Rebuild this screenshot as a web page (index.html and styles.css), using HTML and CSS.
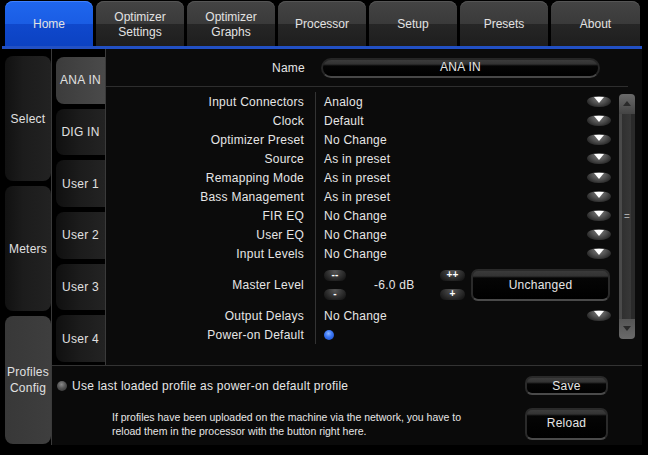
FILE: index.html
```html
<!DOCTYPE html>
<html>
<head>
<meta charset="utf-8">
<link rel="stylesheet" href="styles.css">
</head>
<body>
<div class="app">
  <nav class="tabs">
    <div class="tab active">Home</div>
    <div class="tab">Optimizer<br>Settings</div>
    <div class="tab">Optimizer<br>Graphs</div>
    <div class="tab">Processor</div>
    <div class="tab">Setup</div>
    <div class="tab">Presets</div>
    <div class="tab">About</div>
  </nav>
  <div class="blue-bar"></div>
  <div class="main">
    <div class="side">
      <div class="side-btn">Select</div>
      <div class="side-btn">Meters</div>
      <div class="side-btn tall active">Profiles<br>Config</div>
    </div>
    <div class="right">
      <div class="upper">
        <div class="ptabs">
          <div class="ptab active">ANA IN</div>
          <div class="ptab">DIG IN</div>
          <div class="ptab">User 1</div>
          <div class="ptab">User 2</div>
          <div class="ptab">User 3</div>
          <div class="ptab">User 4</div>
        </div>
        <div class="panel">
          <div class="name-row">
            <span class="name-label">Name</span>
            <div class="name-field">ANA IN</div>
          </div>
          <div class="list-wrap">
            <div class="list">
              <div class="row"><div class="lbl">Input Connectors</div><div class="val"><span>Analog</span><i class="dd"></i></div></div>
              <div class="row"><div class="lbl">Clock</div><div class="val"><span>Default</span><i class="dd"></i></div></div>
              <div class="row"><div class="lbl">Optimizer Preset</div><div class="val"><span>No Change</span><i class="dd"></i></div></div>
              <div class="row"><div class="lbl">Source</div><div class="val"><span>As in preset</span><i class="dd"></i></div></div>
              <div class="row"><div class="lbl">Remapping Mode</div><div class="val"><span>As in preset</span><i class="dd"></i></div></div>
              <div class="row"><div class="lbl">Bass Management</div><div class="val"><span>As in preset</span><i class="dd"></i></div></div>
              <div class="row"><div class="lbl">FIR EQ</div><div class="val"><span>No Change</span><i class="dd"></i></div></div>
              <div class="row"><div class="lbl">User EQ</div><div class="val"><span>No Change</span><i class="dd"></i></div></div>
              <div class="row"><div class="lbl">Input Levels</div><div class="val"><span>No Change</span><i class="dd"></i></div></div>
              <div class="row master"><div class="lbl">Master Level</div>
                <div class="val level">
                  <div class="pair"><div class="pill">--</div><div class="pill">-</div></div>
                  <span class="db">-6.0 dB</span>
                  <div class="pair plus"><div class="pill">++</div><div class="pill">+</div></div>
                  <div class="unchanged">Unchanged</div>
                </div>
              </div>
              <div class="row"><div class="lbl">Output Delays</div><div class="val"><span>No Change</span><i class="dd"></i></div></div>
              <div class="row"><div class="lbl">Power-on Default</div><div class="val"><i class="dot blue"></i></div></div>
            </div>
            <div class="scrollbar">
              <div class="sb-btn up"><i></i></div>
              <div class="sb-track"><span>=</span></div>
              <div class="sb-btn down"><i></i></div>
            </div>
          </div>
        </div>
      </div>
      <div class="bottom">
        <div class="check"><i class="dot grey"></i><span>Use last loaded profile as power-on default profile</span></div>
        <div class="btn save">Save</div>
        <div class="info">If profiles have been uploaded on the machine via the network, you have to<br>reload them in the processor with the button right here.</div>
        <div class="btn reload">Reload</div>
      </div>
    </div>
  </div>
</div>
</body>
</html>
```
FILE: styles.css
```css
* { box-sizing: border-box; }
html, body { margin: 0; padding: 0; background: #000; }
body {
  width: 648px; height: 455px; overflow: hidden;
  font-family: "Liberation Sans", Arial, sans-serif;
  font-size: 12px; color: #e6e6e6; letter-spacing: 0.25px;
}
.app { width: 648px; height: 455px; }

.tabs { display: flex; gap: 3px; padding: 1px 0 0 5px; height: 46px; }
.tab {
  width: 88px; height: 45px; border-radius: 8px 8px 0 0;
  display: flex; align-items: center; justify-content: center; text-align: center;
  line-height: 15px; color: #e2e2e2; padding-top: 2px; letter-spacing: 0;
  background: linear-gradient(#444 0, #3a3a3a 50%, #262626 52%, #1e1e1e 100%);
  box-shadow: inset 0 1px 0 #555;
}
.tab:last-child { width: 89px; }
.tab.active {
  background: linear-gradient(#1f66ee 0, #1a5de4 50%, #0f48cc 52%, #0c42c2 100%);
  box-shadow: inset 0 1px 0 #3f80ff;
}
.blue-bar { height: 3px; margin-left: 2px; width: 640px; background: #2250c4; }

.main { display: flex; height: 396px; }
.side {
  width: 52px; padding: 7px 0 0 5px; border-right: 1px solid #3a3a3a;
  display: flex; flex-direction: column; gap: 5px;
}
.side-btn {
  height: 125px; border-radius: 8px;
  display: flex; align-items: center; justify-content: center; text-align: center;
  line-height: 16px; color: #e0e0e0;
  background: linear-gradient(90deg, #111 0, #1c1c1c 40%, #222 100%);
}
.side-btn.tall { height: 128px; }
.side-btn.active { background: linear-gradient(90deg, #383838, #3e3e3e); }

.right { width: 590px; display: flex; flex-direction: column; }
.upper { display: flex; height: 317px; border-bottom: 1px solid #333; }
.ptabs {
  width: 54px; padding: 8px 0 3px 4px; border-right: 1px solid #3a3a3a;
  display: flex; flex-direction: column; gap: 5px;
}
.ptab {
  flex: 1; border-radius: 8px 0 0 8px;
  display: flex; align-items: center; justify-content: center; color: #e0e0e0;
  background: linear-gradient(90deg, #101010 0, #1c1c1c 50%, #232323 100%);
}
.ptab.active { background: linear-gradient(90deg, #3c3c3c, #4a4a4a); }

.panel { width: 536px; background: #0b0b0b; }
.name-row {
  height: 38px; display: flex; align-items: center;
  border-bottom: 1px solid #2e2e2e; margin-right: 14px;
}
.name-label { width: 199px; text-align: right; }
.name-field {
  margin-left: 16px; width: 279px; height: 20px; border-radius: 10px;
  display: flex; align-items: center; justify-content: center; padding-bottom: 2px;
  background: linear-gradient(#3c3c3c 0, #333 4px, #050505 6px, #000 100%);
  border: 2px solid #262626; border-bottom-color: #474747;
}

.list-wrap { display: flex; padding-top: 5px; }
.list { width: 507px; }
.row { display: flex; height: 19px; }
.row.master { height: 43px; }
.lbl {
  width: 210px; padding-right: 11px; text-align: right;
  border-right: 1px solid #333;
  display: flex; align-items: center; justify-content: flex-end;
}
.val {
  flex: 1; padding-left: 8px; padding-right: 2px;
  display: flex; align-items: center; justify-content: space-between;
}
.dd {
  width: 24px; height: 11px; border-radius: 50%;
  background: radial-gradient(ellipse at 50% 20%, #7a7a7a 0, #555 40%, #2b2b2b 75%, #1a1a1a 100%);
  position: relative;
}
.dd::after {
  content: ""; position: absolute; left: 7px; top: 1px;
  border-left: 5px solid transparent; border-right: 5px solid transparent;
  border-top: 6px solid #fff;
}

.level { justify-content: flex-start; }
.pair { display: flex; flex-direction: column; gap: 8px; width: 22px; }
.pair.plus { width: 25px; margin-left: 23px; }
.pill {
  height: 11px; border-radius: 6px; font-size: 10px; line-height: 9px;
  display: flex; justify-content: center; font-weight: bold; color: #fff;
  background: radial-gradient(ellipse at 50% 15%, #555 0, #333 45%, #1a1a1a 80%, #111 100%);
}
.db { margin-left: 28px; width: 43px; }
.unchanged {
  margin-left: 6px; width: 139px; height: 32px; border-radius: 7px;
  display: flex; align-items: center; justify-content: center;
  background: linear-gradient(#3a3a3a 0, #333 5px, #050505 7px, #000 100%);
  border: 2px solid #2a2a2a; border-bottom-color: #4a4a4a;
}
.dot { width: 10px; height: 10px; border-radius: 50%; display: block; }
.dot.blue { background: radial-gradient(circle at 45% 35%, #8ab4ff 0, #3c78f6 40%, #1746c0 100%); }
.dot.grey { background: radial-gradient(circle at 45% 35%, #8a8a8a 0, #555 45%, #2a2a2a 100%); }

.scrollbar {
  width: 16px; height: 245px; margin: 2px 0 0 6px;
  display: flex; flex-direction: column;
}
.sb-btn {
  height: 20px; position: relative;
  background: linear-gradient(#6a6a6a, #444);
}
.sb-btn.up { border-radius: 4px 4px 0 0; }
.sb-btn.down { border-radius: 0 0 4px 4px; background: linear-gradient(#555, #6a6a6a); }
.sb-btn i { position: absolute; left: 4px; top: 7px; border-left: 4px solid transparent; border-right: 4px solid transparent; }
.sb-btn.up i { border-bottom: 5px solid #2a2a2a; }
.sb-btn.down i { border-top: 5px solid #2a2a2a; }
.sb-track {
  flex: 1; display: flex; align-items: center; justify-content: center;
  font-size: 10px; color: #aaa;
  background: linear-gradient(90deg, #4a4a4a 0, #4a4a4a 3px, #303030 3px, #383838 12px, #2a2a2a 12px);
}

.bottom {
  flex: 1; background: #0a0a0a;
  display: grid; grid-template-columns: 1fr 83px; grid-template-rows: 19px 32px;
  row-gap: 13px; padding: 10px 34px 0 5px;
}
.check { display: flex; align-items: center; gap: 5px; }
.info { padding-left: 55px; font-size: 10.5px; line-height: 14px; align-self: center; letter-spacing: 0; }
.btn {
  border-radius: 7px; display: flex; align-items: center; justify-content: center;
  background: linear-gradient(#3c3c3c 0, #333 4px, #050505 6px, #000 100%);
  border: 2px solid #2a2a2a; border-bottom-color: #4a4a4a;
}
.btn.reload { padding-bottom: 3px; }
```
